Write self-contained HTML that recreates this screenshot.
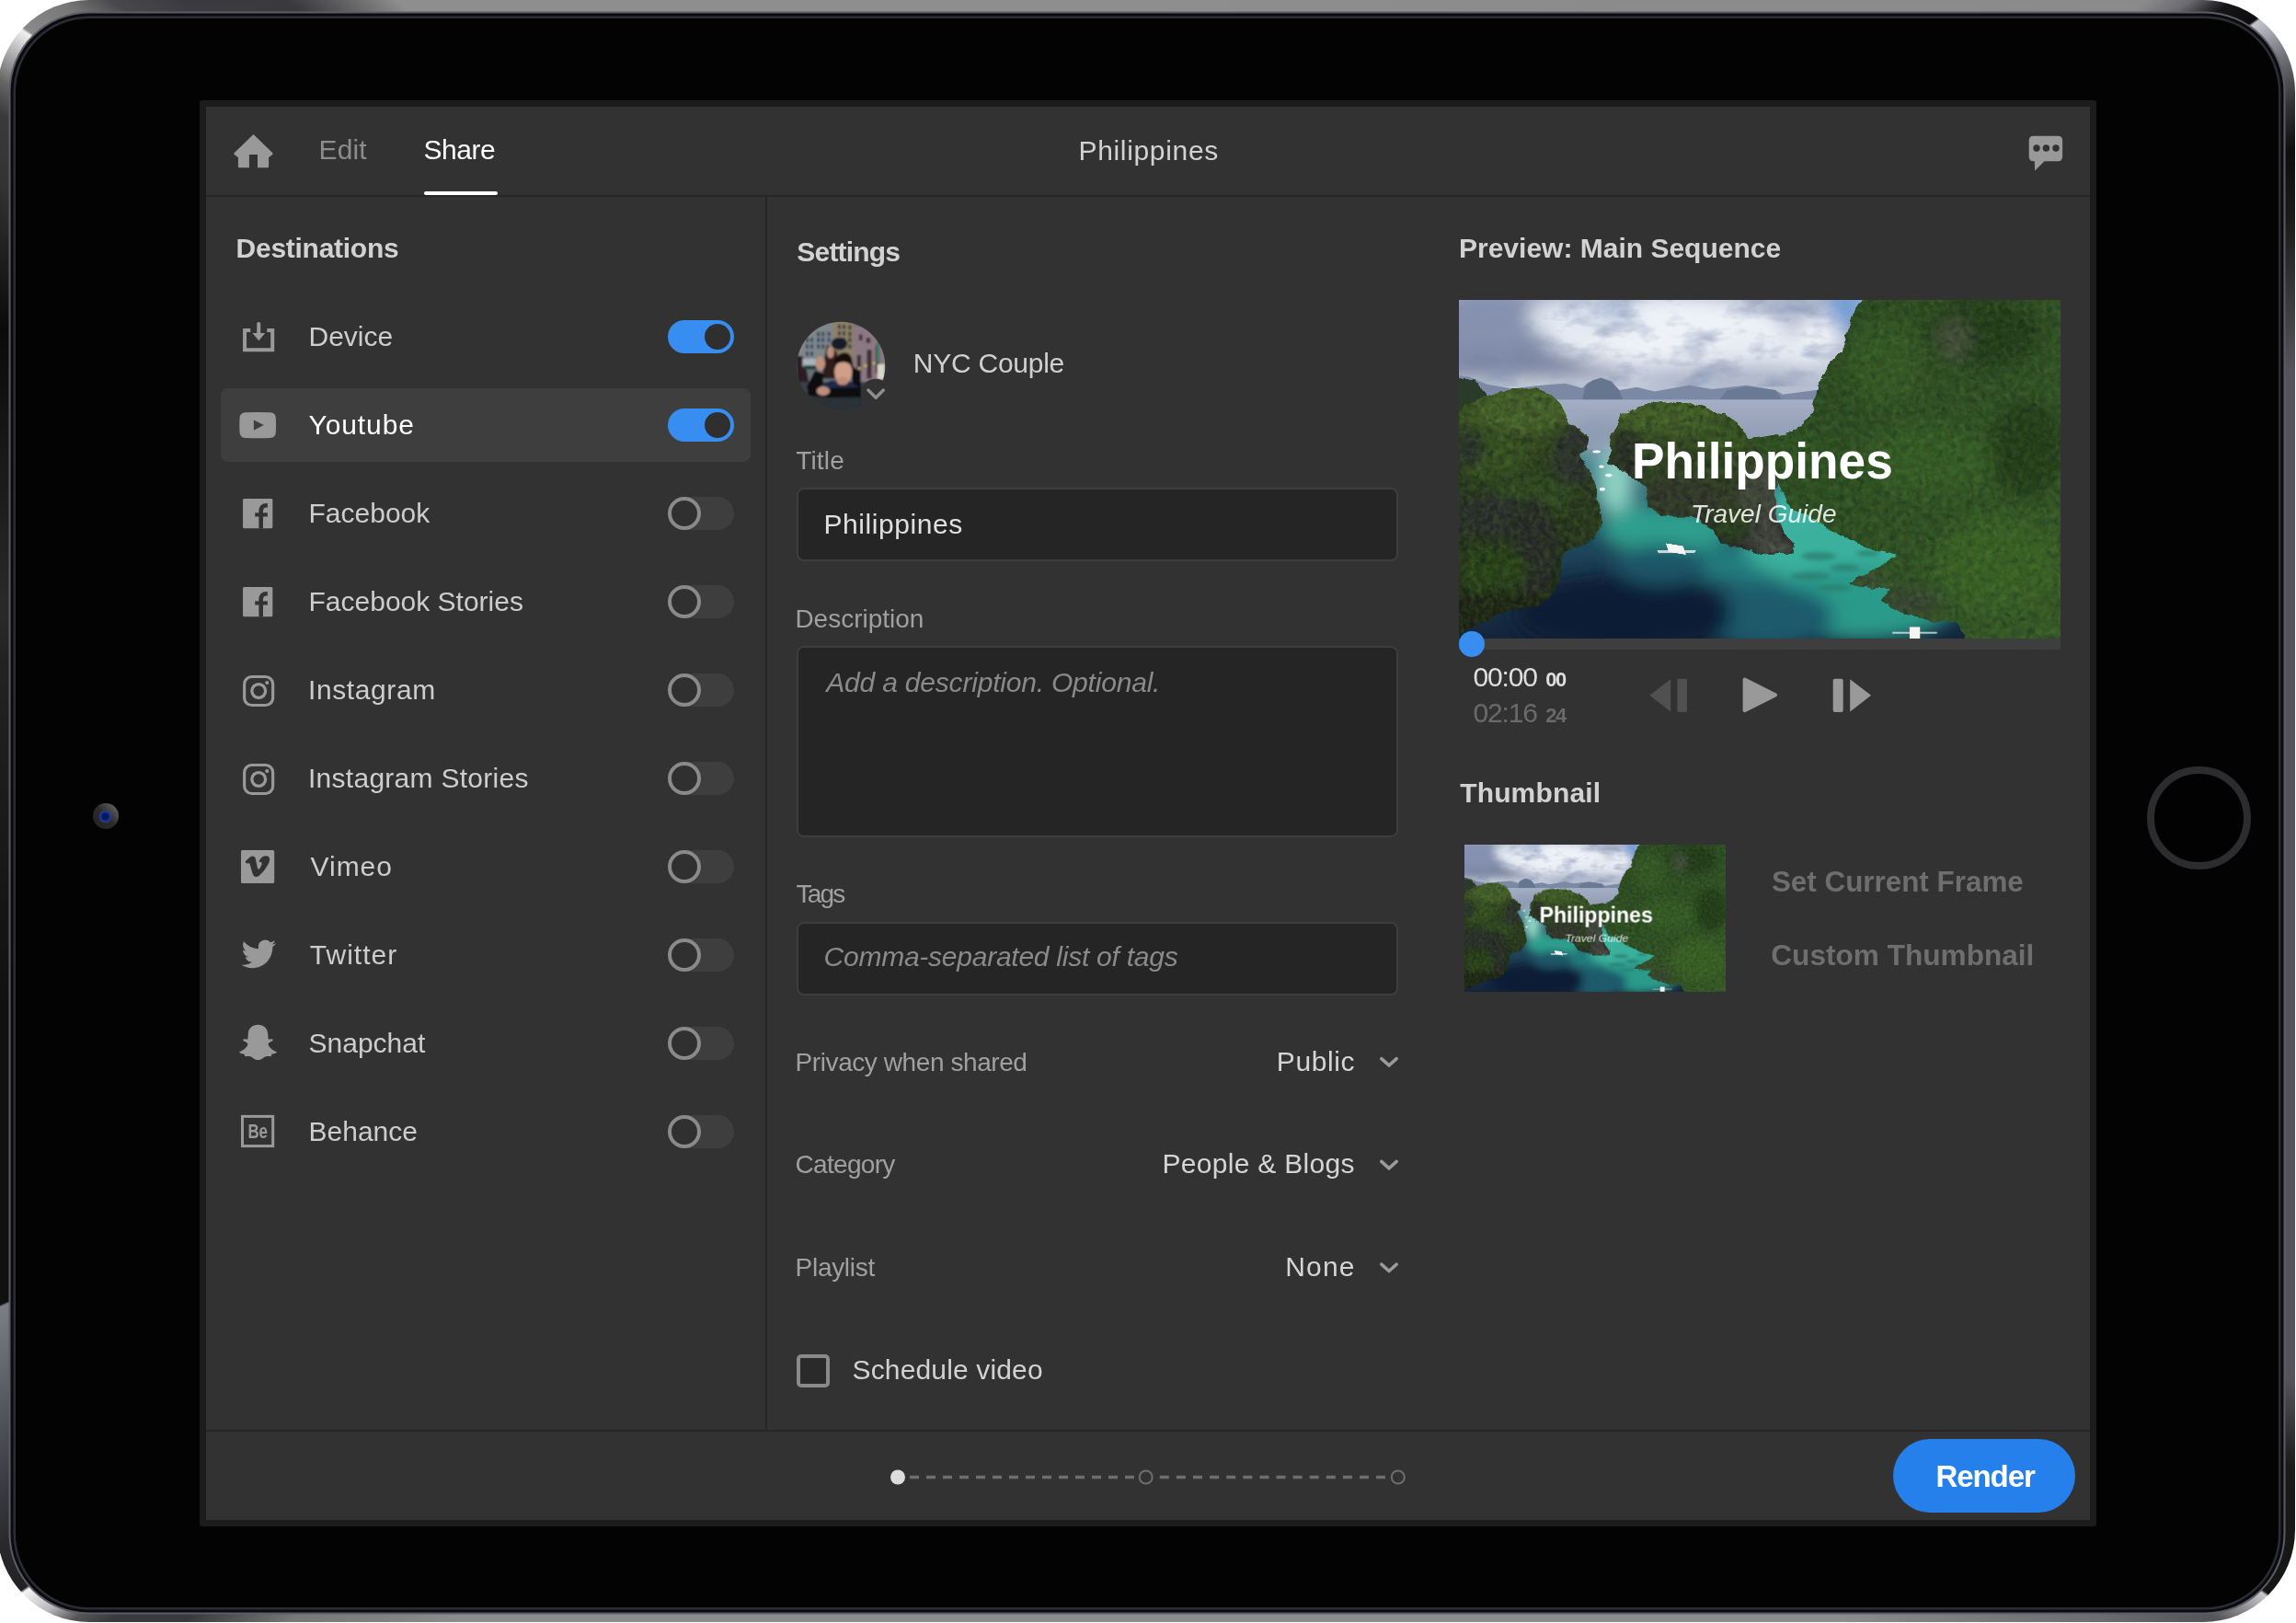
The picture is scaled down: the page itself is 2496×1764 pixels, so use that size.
<!DOCTYPE html>
<html><head><meta charset="utf-8"><title>Share</title>
<style>
html,body{margin:0;padding:0;background:#fff;width:2496px;height:1764px;overflow:hidden;}
body{position:relative;font-family:"Liberation Sans",sans-serif;}
.a{position:absolute;}
.t{position:absolute;white-space:nowrap;line-height:1;}
svg{position:absolute;overflow:visible;}
</style></head>
<body>
<div id="root" style="position:absolute;left:0;top:0;width:2496px;height:1764px;overflow:hidden;will-change:transform;">
<div class="a" style="left:-3px;top:0;width:2498px;height:1762.6px;border-radius:100px;background:conic-gradient(from 0deg at 50% 50%,#8e8e90 0deg,#8a8a8c 51deg,#6a6a70 52.2deg,#151518 53.3deg,#0c0c0e 54.5deg,#c4c4cc 54.62deg,#707078 56.45deg,#333336 58.3deg,#0e0e0e 60deg,#1a1a1a 62.5deg,#56545a 68.9deg,#56545a 116.4deg,#1a1a1a 119.9deg,#151515 124.88deg,#c8c8cc 125deg,#55555a 127deg,#5a5a60 128deg,#6e6e72 130.4deg,#8c8c8e 139.4deg,#8c8c8e 220.3deg,#777 226.6deg,#3a3a3e 229.9deg,#3a3a3e 232deg,#555558 233deg,#bbbbbd 234deg,#f4f4f4 235.18deg,#222226 235.3deg,#2a2a2e 237.5deg,#4a4c54 241.3deg,#7c7e86 246.6deg,#101010 246.7deg,#101010 260deg,#222 277.4deg,#2a2a2a 280deg,#0a0a0a 292.9deg,#333 298.8deg,#3a3a3e 301.3deg,#666 302.55deg,#f0f0f0 304.78deg,#8a8a8c 304.9deg,#777 306.7deg,#48484c 308.1deg,#3a3a40 310.1deg,#3a3a3e 313.4deg,#8e8e90 317.3deg,#8e8e90 360deg);"></div>
<div class="a" style="left:17px;top:20px;width:2460.3px;height:1726.6px;border-radius:80px;background:#030303;box-shadow:0 0 0 2.5px #2a2e33,0 0 0 5.5px #0a0a12,0 0 0 7.5px #5c5c62;"></div>
<div class="a" style="left:101.2px;top:873.1px;width:28px;height:28px;border-radius:50%;background:linear-gradient(225deg,#6a6a6a 5%,#2a2a2a 50%,#222 100%);"></div>
<div class="a" style="left:108.1px;top:881.1px;width:12.8px;height:12.8px;border-radius:50%;background:radial-gradient(circle at 50% 50%,#051050 0%,#0a1a6a 35%,#2a4aa0 75%,#2a4a9a 100%);"></div>
<div class="a" style="left:2334.2px;top:832.5px;width:112.8px;height:112.8px;border-radius:50%;box-sizing:border-box;border:8.5px solid #2c2c2e;background:#020202;"></div>
<div class="a" style="left:217px;top:109px;width:2062px;height:1550px;background:#1c1c1c;border-radius:3px;"></div>
<div class="a" style="left:224px;top:116px;width:2048px;height:1536px;background:#323232;"></div>
<svg class="a" style="left:0;top:0" width="2496" height="230" viewBox="0 0 2496 230"><path fill="#999999" d="M275.5 146 L254.6 166.2 Q254 167.4 255 168.2 L258.9 171 V181 Q258.9 182.2 260.1 182.2 H270.9 V168.1 H280 V182.2 H290.9 Q292.1 182.2 292.1 181 V171 L296 168.2 Q297 167.4 296.4 166.2 Z"/><path fill="#999999" d="M2210.7 147.8 H2237.1 Q2242.1 147.8 2242.1 152.8 V170.2 Q2242.1 175.2 2237.1 175.2 H2222.5 L2212.2 185.4 L2211.8 175.2 H2210.7 Q2205.7 175.2 2205.7 170.2 V152.8 Q2205.7 147.8 2210.7 147.8 Z"/><circle cx="2214" cy="161" r="3.7" fill="#323232"/><circle cx="2224.4" cy="161" r="3.7" fill="#323232"/><circle cx="2235" cy="161" r="3.7" fill="#323232"/></svg>
<div class="t" style="top:148.10px;left:346.60px;font-size:30px;color:#8c8c8c;letter-spacing:0.1px;">Edit</div>
<div class="t" style="top:148.10px;left:460.60px;font-size:30px;color:#ffffff;letter-spacing:-0.5px;">Share</div>
<div class="a" style="left:460.6px;top:208px;width:80.4px;height:4px;background:#ffffff;border-radius:2px;"></div>
<div class="t" style="top:148.50px;left:1098.70px;width:300px;text-align:center;font-size:30px;color:#d2d2d2;letter-spacing:0.67px;">Philippines</div>
<div class="a" style="left:224px;top:212px;width:2048px;height:2.3px;background:#262626;"></div>
<div class="a" style="left:832px;top:214px;width:2px;height:1340px;background:#262626;"></div>
<div class="t" style="top:254.80px;left:256.60px;font-size:30px;color:#d2d2d2;font-weight:bold;letter-spacing:-0.27px;">Destinations</div>
<div class="a" style="left:240px;top:422px;width:576px;height:80px;background:#3e3e3e;border-radius:8px;"></div>
<div class="t" style="top:350.61px;left:335.50px;font-size:30px;color:#cdcdcd;">Device</div>
<div class="a" style="left:726px;top:348px;width:72px;height:36px;border-radius:18px;background:#378ef0;"></div>
<div class="a" style="left:766px;top:352px;width:28px;height:28px;border-radius:50%;background:#2f2f2f;"></div>
<div class="t" style="top:446.61px;left:335.50px;font-size:30px;color:#ffffff;letter-spacing:0.9px;">Youtube</div>
<div class="a" style="left:726px;top:444px;width:72px;height:36px;border-radius:18px;background:#378ef0;"></div>
<div class="a" style="left:766px;top:448px;width:28px;height:28px;border-radius:50%;background:#2f2f2f;"></div>
<div class="t" style="top:542.61px;left:335.50px;font-size:30px;color:#cdcdcd;">Facebook</div>
<div class="a" style="left:726px;top:540px;width:72px;height:36px;border-radius:18px;background:#3e3e3e;"></div>
<div class="a" style="left:726px;top:540px;width:36px;height:36px;border-radius:50%;box-sizing:border-box;border:4px solid #8a8a8a;background:#303030;"></div>
<div class="t" style="top:638.61px;left:335.50px;font-size:30px;color:#cdcdcd;">Facebook Stories</div>
<div class="a" style="left:726px;top:636px;width:72px;height:36px;border-radius:18px;background:#3e3e3e;"></div>
<div class="a" style="left:726px;top:636px;width:36px;height:36px;border-radius:50%;box-sizing:border-box;border:4px solid #8a8a8a;background:#303030;"></div>
<div class="t" style="top:734.61px;left:335.00px;font-size:30px;color:#cdcdcd;letter-spacing:0.6px;">Instagram</div>
<div class="a" style="left:726px;top:732px;width:72px;height:36px;border-radius:18px;background:#3e3e3e;"></div>
<div class="a" style="left:726px;top:732px;width:36px;height:36px;border-radius:50%;box-sizing:border-box;border:4px solid #8a8a8a;background:#303030;"></div>
<div class="t" style="top:830.61px;left:335.00px;font-size:30px;color:#cdcdcd;letter-spacing:0.27px;">Instagram Stories</div>
<div class="a" style="left:726px;top:828px;width:72px;height:36px;border-radius:18px;background:#3e3e3e;"></div>
<div class="a" style="left:726px;top:828px;width:36px;height:36px;border-radius:50%;box-sizing:border-box;border:4px solid #8a8a8a;background:#303030;"></div>
<div class="t" style="top:926.61px;left:337.50px;font-size:30px;color:#cdcdcd;letter-spacing:1.0px;">Vimeo</div>
<div class="a" style="left:726px;top:924px;width:72px;height:36px;border-radius:18px;background:#3e3e3e;"></div>
<div class="a" style="left:726px;top:924px;width:36px;height:36px;border-radius:50%;box-sizing:border-box;border:4px solid #8a8a8a;background:#303030;"></div>
<div class="t" style="top:1022.61px;left:336.80px;font-size:30px;color:#cdcdcd;letter-spacing:1.0px;">Twitter</div>
<div class="a" style="left:726px;top:1020px;width:72px;height:36px;border-radius:18px;background:#3e3e3e;"></div>
<div class="a" style="left:726px;top:1020px;width:36px;height:36px;border-radius:50%;box-sizing:border-box;border:4px solid #8a8a8a;background:#303030;"></div>
<div class="t" style="top:1118.61px;left:335.50px;font-size:30px;color:#cdcdcd;">Snapchat</div>
<div class="a" style="left:726px;top:1116px;width:72px;height:36px;border-radius:18px;background:#3e3e3e;"></div>
<div class="a" style="left:726px;top:1116px;width:36px;height:36px;border-radius:50%;box-sizing:border-box;border:4px solid #8a8a8a;background:#303030;"></div>
<div class="t" style="top:1214.61px;left:335.50px;font-size:30px;color:#cdcdcd;">Behance</div>
<div class="a" style="left:726px;top:1212px;width:72px;height:36px;border-radius:18px;background:#3e3e3e;"></div>
<div class="a" style="left:726px;top:1212px;width:36px;height:36px;border-radius:50%;box-sizing:border-box;border:4px solid #8a8a8a;background:#303030;"></div>
<svg class="a" style="left:0;top:0" width="900" height="1300" viewBox="0 0 900 1300"><path fill="none" stroke="#999999" stroke-width="4" d="M272.2 359.1 H266.05 V380.2 H296.2 V359.1 H290.3"/><path fill="none" stroke="#999999" stroke-width="4" stroke-linecap="round" d="M281.25 352 V364"/><path fill="#999999" d="M274.4 362 H288.3 L281.35 370.2 Z"/><path fill="#999999" d="M266.5 448.3 Q280.2 447.6 293.9 448.3 Q299.6 448.6 299.9 454.5 Q300.3 462.1 299.9 469.7 Q299.6 475.6 293.9 475.9 Q280.2 476.6 266.5 475.9 Q260.8 475.6 260.5 469.7 Q260.1 462.1 260.5 454.5 Q260.8 448.6 266.5 448.3 Z"/><path fill="#3e3e3e" d="M275.9 456.4 V467.7 L286.8 462 Z"/><rect x="264.05" y="542" width="32.3" height="32.2" rx="1.5" fill="#999999"/><path fill="none" stroke="#323232" stroke-width="4.6" d="M283.7 574.6 V555.4 Q283.7 549.2 289.9 549.2 H290.85"/><rect x="277.2" y="557.4" width="13.65" height="4.1" fill="#323232"/><rect x="264.05" y="638" width="32.3" height="32.2" rx="1.5" fill="#999999"/><path fill="none" stroke="#323232" stroke-width="4.6" d="M283.7 670.6 V651.4 Q283.7 645.2 289.9 645.2 H290.85"/><rect x="277.2" y="653.4" width="13.65" height="4.1" fill="#323232"/><rect x="265.65" y="735.5" width="31" height="31" rx="8" fill="none" stroke="#999999" stroke-width="3.2"/><circle cx="281.2" cy="751" r="7.4" fill="none" stroke="#999999" stroke-width="3.3"/><circle cx="290.3" cy="742.1" r="2.1" fill="#999999"/><rect x="265.65" y="831.5" width="31" height="31" rx="8" fill="none" stroke="#999999" stroke-width="3.2"/><circle cx="281.2" cy="847" r="7.4" fill="none" stroke="#999999" stroke-width="3.3"/><circle cx="290.3" cy="838.1" r="2.1" fill="#999999"/><rect x="262" y="923.9" width="36.2" height="36.1" rx="1.5" fill="#999999"/><g transform="translate(250,912) scale(0.036969)"><path fill="#323232" d="M445 660 L590 530 C650 480 730 490 755 580 L805 830 C815 880 840 900 865 870 C900 830 950 740 935 700 C925 670 880 660 850 675 C880 560 980 480 1080 495 C1160 510 1180 580 1160 650 C1120 800 900 1080 790 1110 C720 1125 680 1060 655 980 L590 750 C575 700 545 700 490 720 Z"/></g><g transform="translate(262.6,1018.2) scale(1.5625)"><path fill="#999999" d="M23.953 4.57a10 10 0 01-2.825.775 4.958 4.958 0 002.163-2.723c-.951.555-2.005.959-3.127 1.184a4.92 4.92 0 00-8.384 4.482C7.69 8.095 4.067 6.13 1.64 3.162a4.822 4.822 0 00-.666 2.475c0 1.71.87 3.213 2.188 4.096a4.904 4.904 0 01-2.228-.616v.06a4.923 4.923 0 003.946 4.827 4.996 4.996 0 01-2.212.085 4.936 4.936 0 004.604 3.417 9.867 9.867 0 01-6.102 2.105c-.39 0-.779-.023-1.17-.067a13.995 13.995 0 007.557 2.209c9.053 0 13.998-7.496 13.998-13.985 0-.21 0-.42-.015-.63A9.935 9.935 0 0024 4.59z"/></g><g transform="translate(250,1104) scale(0.036969)"><path fill="#999999" d="M825 262 C650 262 535 390 535 540 L525 690 C480 700 440 680 410 685 C375 695 380 730 410 745 C460 775 520 790 525 830 C520 900 420 1010 275 1065 C270 1090 330 1120 420 1130 C430 1150 430 1180 445 1195 C500 1200 560 1170 640 1215 C700 1260 760 1300 825 1300 C890 1300 950 1260 1010 1215 C1090 1170 1150 1200 1205 1195 C1220 1180 1220 1150 1230 1130 C1320 1120 1380 1090 1378 1065 C1230 1010 1130 900 1125 830 C1130 790 1190 775 1240 745 C1270 730 1275 695 1240 685 C1210 680 1170 700 1125 690 L1115 540 C1115 390 1000 262 825 262 Z"/></g><rect x="263.5" y="1213.4" width="33.2" height="32.2" fill="none" stroke="#999999" stroke-width="3"/><text x="269.4" y="1237" font-family="Liberation Sans" font-weight="bold" font-size="22.5" fill="#999999" textLength="21.6" lengthAdjust="spacingAndGlyphs">Be</text></svg>
<div class="t" style="top:259.21px;left:866.30px;font-size:30px;color:#d2d2d2;font-weight:bold;letter-spacing:-0.8px;">Settings</div>
<svg class="a" style="left:856px;top:340px" width="120" height="116" viewBox="0 0 1679 1623"><defs><clipPath id="avc"><circle cx="815" cy="810" r="672"/></clipPath><filter id="avb" x="-10%" y="-10%" width="120%" height="120%"><feGaussianBlur stdDeviation="14"/></filter></defs><g clip-path="url(#avc)"><g filter="url(#avb)"><rect x="100" y="100" width="1500" height="1450" fill="#6a7078"/><path d="M150 300 L700 120 L700 800 L150 800 Z" fill="#80878a"/><rect x="690" y="120" width="320" height="640" fill="#8e8068"/><path d="M1010 200 L1500 260 L1500 1050 L1010 1050 Z" fill="#8c7882"/><rect x="280" y="380" width="42" height="65" fill="#2f4560"/><rect x="350" y="380" width="42" height="65" fill="#2f4560"/><rect x="450" y="380" width="42" height="65" fill="#2f4560"/><rect x="520" y="380" width="42" height="65" fill="#2f4560"/><rect x="280" y="480" width="42" height="65" fill="#2f4560"/><rect x="350" y="480" width="42" height="65" fill="#2f4560"/><rect x="450" y="480" width="42" height="65" fill="#2f4560"/><rect x="520" y="480" width="42" height="65" fill="#2f4560"/><rect x="280" y="590" width="42" height="65" fill="#2f4560"/><rect x="350" y="590" width="42" height="65" fill="#2f4560"/><rect x="450" y="290" width="42" height="65" fill="#2f4560"/><rect x="520" y="290" width="42" height="65" fill="#2f4560"/><rect x="610" y="290" width="42" height="65" fill="#2f4560"/><rect x="610" y="380" width="42" height="65" fill="#2f4560"/><rect x="770" y="180" width="40" height="65" fill="#30353c"/><rect x="840" y="180" width="40" height="65" fill="#30353c"/><rect x="930" y="190" width="40" height="65" fill="#30353c"/><rect x="770" y="280" width="40" height="65" fill="#30353c"/><rect x="840" y="280" width="40" height="65" fill="#30353c"/><rect x="930" y="290" width="40" height="65" fill="#30353c"/><rect x="930" y="380" width="40" height="65" fill="#30353c"/><rect x="930" y="480" width="40" height="65" fill="#30353c"/><rect x="840" y="380" width="40" height="65" fill="#30353c"/><rect x="1060" y="640" width="60" height="380" fill="#3a2e34"/><rect x="1210" y="560" width="70" height="440" fill="#3a2e34"/><rect x="1340" y="500" width="60" height="420" fill="#3a2e34"/><rect x="1090" y="330" width="50" height="90" fill="#3a2e34"/><rect x="1200" y="380" width="60" height="80" fill="#3a2e34"/><rect x="1370" y="780" width="110" height="230" fill="#d8d6c8"/><rect x="1355" y="420" width="50" height="340" fill="#3f7a68"/><path d="M130 650 L230 660 L300 900 L330 1080 L150 1080 Z" fill="#2a1c22"/><rect x="230" y="700" width="200" height="120" fill="#aab4ba"/><rect x="250" y="800" width="200" height="60" fill="#1f4038"/><rect x="100" y="1050" width="1500" height="500" fill="#3a3f48"/><path d="M600 480 C560 700 520 900 560 1000 L720 1000 L760 600 Z" fill="#2e1c1e"/><ellipse cx="790" cy="470" rx="125" ry="95" fill="#141c2c"/><ellipse cx="655" cy="600" rx="55" ry="90" fill="#b98e7c"/><ellipse cx="500" cy="770" rx="75" ry="110" fill="#bd917f"/><path d="M420 880 L560 930 L520 1180 L1120 1120 L1130 1290 L640 1290 L320 1260 L300 1120 Z" fill="#0c0c10"/><path d="M960 780 L1100 900 L1130 1200 L1000 1200 Z" fill="#101018"/><path d="M520 1100 L660 1030 L950 1050 L1130 1150 L1150 1500 L420 1500 Z" fill="#1c2a4a"/><path d="M320 1260 L1130 1290 L1100 1520 L500 1520 Z" fill="#2c3038"/><path d="M300 1110 L420 880 L560 930 L500 1150 L1120 1130 L1130 1280 L640 1290 L320 1255 Z" fill="#0a0a0e"/><ellipse cx="850" cy="900" rx="135" ry="175" fill="#cf9f88"/><ellipse cx="840" cy="1040" rx="90" ry="60" fill="#c08a76"/><path d="M705 850 C690 650 820 590 900 610 C990 635 1000 760 985 850 C960 770 900 745 840 750 C770 755 725 790 705 850 Z" fill="#16110f"/><ellipse cx="545" cy="1190" rx="100" ry="70" fill="#ba8e7b"/><circle cx="1095" cy="845" r="18" fill="#e8d040"/><circle cx="1190" cy="805" r="18" fill="#e8d040"/><circle cx="1318" cy="765" r="18" fill="#e8d040"/></g></g><circle cx="1342" cy="1232" r="228" fill="#323232"/><path fill="none" stroke="#8e8e8e" stroke-width="48" stroke-linecap="round" stroke-linejoin="round" d="M1230 1175 L1345 1290 L1460 1175"/></svg>
<div class="t" style="top:379.91px;left:992.80px;font-size:30px;color:#d0d0d0;letter-spacing:-0.25px;">NYC Couple</div>
<div class="t" style="top:486.70px;left:865.20px;font-size:28px;color:#a0a0a0;letter-spacing:0.2px;">Title</div>
<div class="a" style="left:866px;top:530px;width:654px;height:80px;box-sizing:border-box;border:2px solid #3d3d3d;border-radius:8px;background:#252525;"></div>
<div class="t" style="top:554.61px;left:895.40px;font-size:30px;color:#e0e0e0;letter-spacing:0.58px;">Philippines</div>
<div class="t" style="top:658.90px;left:864.40px;font-size:28px;color:#a0a0a0;">Description</div>
<div class="a" style="left:866px;top:702px;width:654px;height:208px;box-sizing:border-box;border:2px solid #3d3d3d;border-radius:8px;background:#252525;"></div>
<div class="t" style="top:726.90px;left:898.30px;font-size:30px;color:#8a8a8a;font-style:italic;letter-spacing:-0.2px;">Add a description. Optional.</div>
<div class="t" style="top:957.80px;left:865.60px;font-size:28px;color:#a0a0a0;letter-spacing:-1.8px;">Tags</div>
<div class="a" style="left:866px;top:1002px;width:654px;height:80px;box-sizing:border-box;border:2px solid #3d3d3d;border-radius:8px;background:#252525;"></div>
<div class="t" style="top:1025.40px;left:895.60px;font-size:30px;color:#8a8a8a;font-style:italic;letter-spacing:-0.25px;">Comma-separated list of tags</div>
<div class="t" style="top:1140.60px;left:864.60px;font-size:28px;color:#a0a0a0;letter-spacing:-0.42px;">Privacy when shared</div>
<div class="t" style="top:1138.61px;right:1022.90px;font-size:30px;color:#d5d5d5;letter-spacing:0.6px;">Public</div>
<svg class="a" style="left:0;top:0" width="2496" height="1764" viewBox="0 0 2496 1764"><path fill="none" stroke="#9a9a9a" stroke-width="3.6" stroke-linecap="round" stroke-linejoin="round" d="M1501.8 1150.6 L1510 1158.0 L1518.2 1150.6"/></svg>
<div class="t" style="top:1252.40px;left:864.60px;font-size:28px;color:#a0a0a0;letter-spacing:-0.7px;">Category</div>
<div class="t" style="top:1250.40px;right:1023.20px;font-size:30px;color:#d5d5d5;letter-spacing:0.3px;">People &amp; Blogs</div>
<svg class="a" style="left:0;top:0" width="2496" height="1764" viewBox="0 0 2496 1764"><path fill="none" stroke="#9a9a9a" stroke-width="3.6" stroke-linecap="round" stroke-linejoin="round" d="M1501.8 1262.3999999999999 L1510 1269.8 L1518.2 1262.3999999999999"/></svg>
<div class="t" style="top:1364.10px;left:864.60px;font-size:28px;color:#a0a0a0;letter-spacing:-0.3px;">Playlist</div>
<div class="t" style="top:1362.11px;right:1022.30px;font-size:30px;color:#d5d5d5;letter-spacing:1.2px;">None</div>
<svg class="a" style="left:0;top:0" width="2496" height="1764" viewBox="0 0 2496 1764"><path fill="none" stroke="#9a9a9a" stroke-width="3.6" stroke-linecap="round" stroke-linejoin="round" d="M1501.8 1374.1 L1510 1381.5 L1518.2 1374.1"/></svg>
<div class="a" style="left:866px;top:1472px;width:36px;height:36px;box-sizing:border-box;border:4px solid #8a8a8a;border-radius:5px;background:#2a2a2a;"></div>
<div class="t" style="top:1473.81px;left:926.50px;font-size:30px;color:#d2d2d2;letter-spacing:0.15px;">Schedule video</div>
<svg class="a" style="left:0;top:0" width="0" height="0"><defs><linearGradient id="gsky" x1="0" y1="0" x2="0" y2="1"><stop offset="0" stop-color="#a9b4cb"/><stop offset="0.7" stop-color="#c3cad8"/><stop offset="1" stop-color="#b4bccd"/></linearGradient><linearGradient id="gsea" x1="0" y1="0" x2="0" y2="1"><stop offset="0" stop-color="#a4aec4"/><stop offset="0.5" stop-color="#8e9ab2"/><stop offset="1" stop-color="#7589a2"/></linearGradient><linearGradient id="gwat" x1="0" y1="0" x2="0" y2="1"><stop offset="0" stop-color="#4f8f96"/><stop offset="0.45" stop-color="#1f4a5e"/><stop offset="1" stop-color="#14243a"/></linearGradient><linearGradient id="gisl" x1="0" y1="0" x2="0" y2="1"><stop offset="0" stop-color="#46622a"/><stop offset="0.35" stop-color="#2c4022"/><stop offset="1" stop-color="#1a2119"/></linearGradient><linearGradient id="gcen" x1="0" y1="0" x2="0" y2="1"><stop offset="0" stop-color="#47652b"/><stop offset="0.4" stop-color="#324629"/><stop offset="1" stop-color="#30322e"/></linearGradient><linearGradient id="gclf" x1="0" y1="0" x2="1" y2="1"><stop offset="0" stop-color="#2b4a25"/><stop offset="0.5" stop-color="#31542a"/><stop offset="1" stop-color="#3a602c"/></linearGradient><filter id="b30" x="-30%" y="-30%" width="160%" height="160%"><feGaussianBlur stdDeviation="30"/></filter><filter id="b18" x="-30%" y="-30%" width="160%" height="160%"><feGaussianBlur stdDeviation="16"/></filter><filter id="b8" x="-30%" y="-30%" width="160%" height="160%"><feGaussianBlur stdDeviation="7"/></filter><filter id="nz" x="0" y="0" width="100%" height="100%"><feTurbulence type="fractalNoise" baseFrequency="0.045" numOctaves="3" seed="7" result="n"/><feColorMatrix in="n" type="matrix" values="0 0 0 0 0  0 0 0 0 0  0 0 0 0 0  0.9 0.9 0 0 -0.62" result="a"/><feComposite in="SourceGraphic" in2="a" operator="in"/></filter><filter id="nzc" x="0" y="0" width="100%" height="100%"><feTurbulence type="fractalNoise" baseFrequency="0.007 0.014" numOctaves="4" seed="11" result="n"/><feColorMatrix in="n" type="matrix" values="0 0 0 0 0  0 0 0 0 0  0 0 0 0 0  1.8 1.4 0 0 -1.5" result="a"/><feComposite in="SourceGraphic" in2="a" operator="in"/></filter><filter id="disp" filterUnits="userSpaceOnUse" x="0" y="0" width="2260" height="1340"><feTurbulence type="fractalNoise" baseFrequency="0.022" numOctaves="3" seed="5" result="t"/><feDisplacementMap in="SourceGraphic" in2="t" scale="26" xChannelSelector="R" yChannelSelector="G"/></filter><filter id="nz2" x="0" y="0" width="100%" height="100%"><feTurbulence type="fractalNoise" baseFrequency="0.05" numOctaves="3" seed="23" result="n"/><feColorMatrix in="n" type="matrix" values="0 0 0 0 0  0 0 0 0 0  0 0 0 0 0  1.2 0.8 0 0 -0.72" result="a"/><feComposite in="SourceGraphic" in2="a" operator="in"/></filter><clipPath id="cl"><path d="M10 475 L83 462 L179 416 L263 389 L324 386 L393 401 L432 439 L470 516 L523 546 L531 600 L500 616 L539 677 L562 753 L581 853 L539 914 L447 960 L424 1083 L370 1137 L217 1175 L83 1236 L10 1270 Z"/></clipPath><clipPath id="cc"><path d="M604 654 L608 554 L646 478 L715 447 L792 432 L868 432 L945 462 L1000 480 L1052 516 L1090 565 L1150 640 L1185 720 L1175 800 L1205 880 L1240 930 L1235 962 L1148 964 L1121 960 L983 922 L960 876 L891 830 L784 830 L738 799 L730 730 L661 677 Z"/></clipPath><clipPath id="cr"><path d="M1500 10 L2240 10 L2240 1330 L1865 1330 L1835 1255 L1812 1205 L1697 1190 L1620 1167 L1544 1121 L1574 1083 L1498 1083 L1436 1060 L1482 1037 L1559 999 L1605 968 L1513 945 L1406 899 L1314 845 L1237 799 L1199 746 L1150 640 L1090 565 L1237 539 L1298 493 L1321 409 L1344 332 L1413 255 L1444 140 L1482 83 Z"/></clipPath><clipPath id="cframe"><rect x="83" y="83" width="2085" height="1172"/></clipPath></defs><symbol id="photo" viewBox="83 83 2085 1172" preserveAspectRatio="none"><g clip-path="url(#cframe)"><rect x="83" y="83" width="2085" height="360" fill="url(#gsky)"/><g filter="url(#b30)"><ellipse cx="190" cy="190" rx="210" ry="140" fill="#8691ae"/><ellipse cx="330" cy="330" rx="330" ry="36" fill="#8a94ad"/><ellipse cx="800" cy="190" rx="420" ry="120" fill="#eef2f7"/><ellipse cx="520" cy="150" rx="200" ry="70" fill="#e2e8f1"/><ellipse cx="1150" cy="270" rx="230" ry="70" fill="#e6ebf3"/><ellipse cx="1050" cy="345" rx="330" ry="38" fill="#aab3c7"/><ellipse cx="250" cy="300" rx="260" ry="45" fill="#7c86a2"/><ellipse cx="420" cy="380" rx="330" ry="22" fill="#d3d9e4"/><ellipse cx="1420" cy="120" rx="62" ry="75" fill="#6f9bd6"/><ellipse cx="1330" cy="200" rx="70" ry="70" fill="#f0f3f8"/><ellipse cx="620" cy="120" rx="70" ry="30" fill="#a9bbd8"/></g><rect x="83" y="83" width="1420" height="300" fill="#8492b2" filter="url(#nzc)" opacity="0.7"/><path d="M83 345 L120 350 L180 375 L270 390 L350 380 L450 372 L510 388 L530 370 L570 355 L610 365 L640 395 L700 385 L760 400 L880 378 L960 392 L1080 378 L1180 395 L1205 410 L1320 395 L1400 400 L1400 440 L83 440 Z" fill="#7b89a4"/><path d="M510 432 L522 380 L545 362 L575 352 L612 366 L640 400 L652 432 Z" fill="#66768f"/><path d="M985 432 L1010 396 L1080 382 L1180 395 L1205 432 Z" fill="#6a7a94"/><rect x="83" y="428" width="1400" height="330" fill="url(#gsea)"/><rect x="83" y="600" width="2085" height="660" fill="url(#gwat)"/><g filter="url(#b30)"><ellipse cx="570" cy="560" rx="80" ry="60" fill="#8e9cb4"/><ellipse cx="625" cy="715" rx="62" ry="115" fill="#8ed2c2"/><ellipse cx="690" cy="850" rx="80" ry="60" fill="#3fae9b"/><ellipse cx="800" cy="880" rx="230" ry="80" fill="#2f9f8d"/><ellipse cx="1080" cy="1000" rx="200" ry="70" fill="#217b7b"/><ellipse cx="1400" cy="930" rx="330" ry="140" fill="#3bb09c"/><ellipse cx="1230" cy="800" rx="70" ry="90" fill="#3db3a2"/><ellipse cx="1480" cy="1130" rx="330" ry="130" fill="#2c9a8a"/><ellipse cx="1150" cy="1180" rx="230" ry="110" fill="#1b5a6c"/><ellipse cx="650" cy="1170" rx="380" ry="140" fill="#111f36"/><ellipse cx="780" cy="1000" rx="160" ry="70" fill="#1e5568"/></g><g filter="url(#b8)" fill="#2b7f70" opacity="0.8"><ellipse cx="1330" cy="970" rx="60" ry="14"/><ellipse cx="1420" cy="1010" rx="50" ry="12"/><ellipse cx="1300" cy="1040" rx="70" ry="14"/><ellipse cx="1500" cy="960" rx="40" ry="10"/><ellipse cx="1380" cy="1080" rx="60" ry="12"/></g><g filter="url(#disp)"><path d="M10 350 L83 351 L140 359 L179 409 L190 470 L83 480 L10 480 Z" fill="#2b3b2b"/><path d="M10 475 L83 462 L179 416 L263 389 L324 386 L393 401 L432 439 L470 516 L523 546 L531 600 L500 616 L539 677 L562 753 L581 853 L539 914 L447 960 L424 1083 L370 1137 L217 1175 L83 1236 L10 1270 Z" fill="url(#gisl)"/><g clip-path="url(#cl)"><g filter="url(#b18)"><ellipse cx="300" cy="470" rx="170" ry="70" fill="#4f6d30"/><ellipse cx="200" cy="620" rx="120" ry="80" fill="#3b5828"/><ellipse cx="480" cy="650" rx="75" ry="130" fill="#2e3135"/><ellipse cx="350" cy="760" rx="160" ry="60" fill="#334d26"/><ellipse cx="180" cy="830" rx="160" ry="75" fill="#2a2d30"/><ellipse cx="340" cy="940" rx="80" ry="170" fill="#292c2e"/><ellipse cx="200" cy="1020" rx="120" ry="90" fill="#2b441d"/><ellipse cx="520" cy="830" rx="60" ry="110" fill="#2a3a22"/><ellipse cx="250" cy="1170" rx="230" ry="80" fill="#1a2419"/><ellipse cx="120" cy="600" rx="50" ry="60" fill="#2c3033"/></g><rect x="10" y="380" width="593" height="900" fill="#151d12" filter="url(#nz)" opacity="0.8"/><rect x="10" y="380" width="593" height="900" fill="#5d7838" filter="url(#nz2)" opacity="0.42"/></g><path d="M604 654 L608 554 L646 478 L715 447 L792 432 L868 432 L945 462 L1000 480 L1052 516 L1090 565 L1150 640 L1185 720 L1175 800 L1205 880 L1240 930 L1235 962 L1148 964 L1121 960 L983 922 L960 876 L891 830 L784 830 L738 799 L730 730 L661 677 Z" fill="url(#gcen)"/><g clip-path="url(#cc)"><g filter="url(#b18)"><ellipse cx="800" cy="490" rx="170" ry="50" fill="#4b6b2e"/><ellipse cx="665" cy="630" rx="55" ry="100" fill="#2b2e2c"/><ellipse cx="1000" cy="560" rx="90" ry="50" fill="#3b5b28"/><ellipse cx="850" cy="770" rx="140" ry="70" fill="#343733"/><ellipse cx="1130" cy="800" rx="80" ry="150" fill="#4a4b46"/><ellipse cx="1030" cy="860" rx="70" ry="60" fill="#304826"/><ellipse cx="1180" cy="940" rx="70" ry="30" fill="#55564f"/></g><rect x="600" y="430" width="650" height="540" fill="#171d14" filter="url(#nz)" opacity="0.8"/><rect x="600" y="430" width="650" height="400" fill="#5d7838" filter="url(#nz2)" opacity="0.4"/></g><path d="M1500 10 L2240 10 L2240 1330 L1865 1330 L1835 1255 L1812 1205 L1697 1190 L1620 1167 L1544 1121 L1574 1083 L1498 1083 L1436 1060 L1482 1037 L1559 999 L1605 968 L1513 945 L1406 899 L1314 845 L1237 799 L1199 746 L1150 640 L1090 565 L1237 539 L1298 493 L1321 409 L1344 332 L1413 255 L1444 140 L1482 83 Z" fill="url(#gclf)"/><g clip-path="url(#cr)"><g filter="url(#b30)"><ellipse cx="1900" cy="200" rx="200" ry="120" fill="#213a1c"/><ellipse cx="1560" cy="300" rx="130" ry="150" fill="#385f2a"/><ellipse cx="1800" cy="220" rx="50" ry="70" fill="#51574c"/><ellipse cx="2050" cy="600" rx="130" ry="170" fill="#233e1d"/><ellipse cx="1700" cy="640" rx="230" ry="120" fill="#39622a"/><ellipse cx="1400" cy="700" rx="150" ry="80" fill="#2d5226"/><ellipse cx="1950" cy="1000" rx="220" ry="160" fill="#3c672c"/><ellipse cx="1650" cy="1130" rx="110" ry="40" fill="#3e4340"/><ellipse cx="1500" cy="1060" rx="60" ry="25" fill="#4a4d48"/><ellipse cx="1250" cy="600" rx="120" ry="50" fill="#335827"/></g><rect x="1080" y="10" width="1160" height="1320" fill="#162a11" filter="url(#nz)" opacity="0.7"/><rect x="1080" y="10" width="1160" height="1320" fill="#5e7c3a" filter="url(#nz2)" opacity="0.4"/></g></g><g fill="#f4f4f4"><path d="M800 925 L860 935 L870 965 L810 955 Z"/><path d="M770 950 L905 950 L900 958 L775 960 Z" opacity="0.8"/><rect x="1645" y="1215" width="36" height="40"/><path d="M1585 1232 H1740 V1238 H1585 Z" opacity="0.7"/><ellipse cx="602" cy="690" rx="12" ry="6"/><ellipse cx="577" cy="660" rx="9" ry="5"/><ellipse cx="580" cy="738" rx="10" ry="6"/><ellipse cx="560" cy="608" rx="14" ry="5"/></g><text x="1134.7" y="701.9" text-anchor="middle" font-family="Liberation Sans" font-weight="bold" font-size="178.6" fill="#ffffff" textLength="905" lengthAdjust="spacingAndGlyphs">Philippines</text><text x="1139.2" y="853.4" text-anchor="middle" font-family="Liberation Sans" font-style="italic" font-size="85.5" fill="#ffffff" fill-opacity="0.85" textLength="505" lengthAdjust="spacingAndGlyphs">Travel Guide</text></g></symbol></svg>
<div class="t" style="top:255.41px;left:1586.00px;font-size:30px;color:#d2d2d2;font-weight:bold;">Preview: Main Sequence</div>
<svg class="a" style="left:1586px;top:326px" width="654" height="368"><use href="#photo" x="0" y="0" width="654" height="368"/></svg>
<div class="a" style="left:1586px;top:694px;width:654px;height:12px;background:#3e3e3e;"></div>
<div class="a" style="left:1585.8px;top:685.8px;width:28px;height:28px;background:#378ef0;border-radius:14px;"></div>
<div class="t" style="top:721.00px;left:1601.60px;font-size:30px;color:#dedede;letter-spacing:-1.2px;">00:00</div>
<div class="t" style="top:727.78px;left:1680.20px;font-size:22px;color:#dedede;font-weight:bold;letter-spacing:-1.4px;">00</div>
<div class="t" style="top:760.21px;left:1601.60px;font-size:30px;color:#6a6a6a;letter-spacing:-1.2px;">02:16</div>
<div class="t" style="top:766.98px;left:1680.20px;font-size:22px;color:#6a6a6a;font-weight:bold;letter-spacing:-1.4px;">24</div>
<svg class="a" style="left:0;top:0" width="2496" height="800" viewBox="0 0 2496 800"><path fill="#505050" d="M1816.2 738.2 V773.5 L1793.3 755.85 Z"/><rect x="1823.4" y="737.7" width="10.6" height="36.3" rx="2" fill="#505050"/><path fill="#999999" stroke="#999999" stroke-width="4" stroke-linejoin="round" d="M1896.6 738.6 V772.2 L1930 755.4 Z"/><rect x="1992.7" y="737.7" width="11" height="36.3" rx="2" fill="#999999"/><path fill="#999999" d="M2011.2 738.2 V773.5 L2034.1 755.85 Z"/></svg>
<div class="t" style="top:846.50px;left:1587.20px;font-size:30px;color:#d2d2d2;font-weight:bold;letter-spacing:0.15px;">Thumbnail</div>
<svg class="a" style="left:1592px;top:918px" width="284" height="160"><use href="#photo" x="0" y="0" width="284" height="160"/></svg>
<div class="t" style="top:943.12px;left:1925.90px;font-size:31.4px;color:#6e6e6e;font-weight:bold;">Set Current Frame</div>
<div class="t" style="top:1023.25px;left:1925.30px;font-size:31.6px;color:#6e6e6e;font-weight:bold;">Custom Thumbnail</div>
<div class="a" style="left:224px;top:1554px;width:2048px;height:2px;background:#262626;"></div>
<svg class="a" style="left:0;top:1580px" width="2496" height="60" viewBox="0 1580 2496 60"><circle cx="976" cy="1605.5" r="8" fill="#dcdcdc"/><circle cx="1245.7" cy="1605.5" r="7" fill="none" stroke="#6e6e6e" stroke-width="2"/><circle cx="1519.8" cy="1605.5" r="7" fill="none" stroke="#6e6e6e" stroke-width="2"/><path d="M989 1605.5 H1234" stroke="#6e6e6e" stroke-width="3.5" stroke-dasharray="10 8" fill="none"/><path d="M1260.8 1605.5 H1506" stroke="#6e6e6e" stroke-width="3.5" stroke-dasharray="10 8.1" fill="none"/></svg>
<div class="a" style="left:2058px;top:1564px;width:198px;height:80px;background:#2680eb;border-radius:40px;"></div>
<div class="t" style="top:1588.07px;left:2008.10px;width:300px;text-align:center;font-size:33px;color:#ffffff;font-weight:bold;letter-spacing:-1.1px;">Render</div>
</div>
</body></html>
